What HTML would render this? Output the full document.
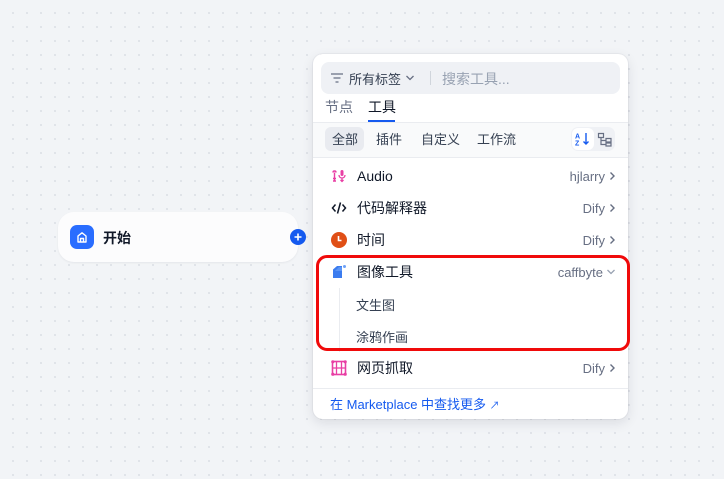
<!DOCTYPE html>
<html><head><meta charset="utf-8"><style>
*{margin:0;padding:0;box-sizing:border-box}
body{width:724px;height:479px;overflow:hidden;background-color:#f2f4f7;background-image:radial-gradient(#dfe2e8 1px,transparent 1.2px);background-size:14px 14px;background-position:6px 6px;font-family:"Liberation Sans","Noto Sans CJK SC",sans-serif;position:relative;color:#101828}
.abs{position:absolute}
.node{left:58px;top:212px;width:240px;height:50px;background:#fcfcfd;border-radius:16px;box-shadow:0 1px 2px rgba(16,24,40,.06)}
.panel{left:313px;top:54px;width:315px;height:365px;background:#fff;border-radius:10px;box-shadow:0 4px 12px rgba(16,24,40,.1),0 0 0 1px rgba(16,24,40,.04)}
.row{position:absolute;left:0;width:315px;height:32px;display:flex;align-items:center;font-size:14px}
.row .name{position:absolute;left:44px}
.row .by{position:absolute;right:12px;font-size:13px;color:#676f83;display:flex;align-items:center;gap:3px}
.ic{position:absolute;left:18px;width:16px;height:16px}
.chip{position:absolute;top:75px;font-size:13px;color:#354052}
</style></head><body>
<div class="abs node">
 <div class="abs" style="left:12px;top:13px;width:24px;height:24px;border-radius:7px;background:#296dff">
  <svg width="24" height="24" viewBox="0 0 24 24"><path d="M8 17V11l4-3.2 4 3.2v6zM10.5 17v-3.5h3V17" fill="none" stroke="#fff" stroke-width="1.4" stroke-linejoin="round"/></svg>
 </div>
 <div class="abs" style="left:45px;top:16px;font-size:14px;font-weight:bold">开始</div>
</div>
<svg class="abs" style="left:290px;top:229px" width="16" height="16"><circle cx="8" cy="8" r="8" fill="#155aef"/><path d="M8 4.5v7M4.5 8h7" stroke="#fff" stroke-width="1.6"/></svg>
<div class="abs panel">
 <div class="abs" style="left:8px;top:8px;width:299px;height:32px;background:#eff1f5;border-radius:8px;font-size:13px;color:#354052">
  <svg class="abs" style="left:9px;top:10px" width="14" height="12"><path d="M1 2h12M3.5 6h7M5.5 10h3" stroke="#676f83" stroke-width="1.3"/></svg>
  <span class="abs" style="left:28px;top:7px">所有标签</span>
  <svg class="abs" style="left:84px;top:12px" width="10" height="8"><path d="M1.5 2l3.5 3.5L8.5 2" fill="none" stroke="#676f83" stroke-width="1.3"/></svg>
  <div class="abs" style="left:109px;top:9px;width:1px;height:14px;background:#d0d5dc"></div>
  <span class="abs" style="left:121px;top:7px;color:#98a2b2;font-size:14px">搜索工具...</span>
 </div>
 <span class="abs" style="left:12px;top:43px;font-size:14px;color:#676f83">节点</span>
 <span class="abs" style="left:55px;top:43px;font-size:14px;color:#101828">工具</span>
 <div class="abs" style="left:55px;top:66px;width:27px;height:2px;background:#155aef"></div>
 <div class="abs" style="left:0;top:68px;width:315px;height:36px;background:#f9fafb;border-top:1px solid #eaecf0;border-bottom:1px solid #eaecf0"></div>
 <div class="abs" style="left:12px;top:73px;width:39px;height:24px;background:#e9ebf0;border-radius:6px"></div>
 <div class="chip" style="left:19px">全部</div>
 <div class="chip" style="left:63px">插件</div>
 <div class="chip" style="left:108px">自定义</div>
 <div class="chip" style="left:164px">工作流</div>
 <div class="abs" style="left:258px;top:73px;width:44px;height:24px;background:#eff1f5;border-radius:7px"></div>
 <div class="abs" style="left:259px;top:74px;width:22px;height:22px;background:#fff;border-radius:6px"></div>
 <svg class="abs" style="left:262px;top:78px" width="16" height="14"><text x="0" y="6.5" font-size="7" fill="#155aef" font-family="Liberation Sans" font-weight="bold">A</text><text x="0" y="13.5" font-size="7" fill="#155aef" font-family="Liberation Sans" font-weight="bold">Z</text><path d="M11 1v11M8.5 9.5L11 12l2.5-2.5" fill="none" stroke="#155aef" stroke-width="1.4"/></svg>
 <svg class="abs" style="left:284px;top:78px" width="16" height="15"><path d="M1.5 1.5h5v4h-5zM9 6.5h5v3.5H9zM9 11h5v3H9zM4 5.5v7h5M4 8.5h5" fill="none" stroke="#676f83" stroke-width="1.2"/></svg>

 <div class="row" style="top:106px"><svg class="ic" viewBox="0 0 16 16"><path d="M2 4.5c0-2 3-2 3 0M3.5 4.5v8M2 10.5h3M2 13h3" fill="none" stroke="#e83fa4" stroke-width="1.4"/><rect x="9.5" y="2" width="3" height="6" rx="1.5" fill="#e83fa4"/><path d="M8 7c0 2 1.5 3 3 3s3-1 3-3M11 10v3.5M9.5 12l1.5 1.5L12.5 12" fill="none" stroke="#e83fa4" stroke-width="1.3"/></svg><span class="name">Audio</span><span class="by">hjlarry <svg width="8" height="10"><path d="M2.5 1.5L6 5 2.5 8.5" fill="none" stroke="#676f83" stroke-width="1.4"/></svg></span></div>
 <div class="row" style="top:138px"><svg class="ic" viewBox="0 0 16 16"><path d="M4.5 4.5L1.5 8l3 3.5M11.5 4.5l3 3.5-3 3.5M9.5 2.5l-3 11" fill="none" stroke="#101828" stroke-width="1.5"/></svg><span class="name">代码解释器</span><span class="by">Dify <svg width="8" height="10"><path d="M2.5 1.5L6 5 2.5 8.5" fill="none" stroke="#676f83" stroke-width="1.4"/></svg></span></div>
 <div class="row" style="top:170px"><svg class="ic" viewBox="0 0 16 16"><circle cx="8" cy="8" r="8" fill="#e04f16"/><path d="M7.5 4v4.5h3" fill="none" stroke="#fff" stroke-width="1.6"/></svg><span class="name">时间</span><span class="by">Dify <svg width="8" height="10"><path d="M2.5 1.5L6 5 2.5 8.5" fill="none" stroke="#676f83" stroke-width="1.4"/></svg></span></div>
 <div class="row" style="top:202px"><svg class="ic" viewBox="0 0 16 16"><path d="M2 5.5L6 2h5v12H2z" fill="#3b7cef"/><path d="M8 3h3v4H3l1 0" fill="#5b95f5"/><circle cx="13.5" cy="2.5" r="1.5" fill="#6ea1f7"/></svg><span class="name">图像工具</span><span class="by">caffbyte <svg width="10" height="8"><path d="M1.5 2l3.5 3.5L8.5 2" fill="none" stroke="#98a2b2" stroke-width="1.3"/></svg></span></div>
 <div class="abs" style="left:26px;top:234px;width:1px;height:64px;background:#eaecf0"></div>
 <div class="row" style="top:234px"><span class="abs" style="left:43px;font-size:13px;color:#354052">文生图</span></div>
 <div class="row" style="top:266px"><span class="abs" style="left:43px;font-size:13px;color:#354052">涂鸦作画</span></div>
 <div class="row" style="top:298px"><svg class="ic" viewBox="0 0 16 16"><rect x="1.5" y="1.5" width="13" height="13" fill="none" stroke="#e83fa4" stroke-width="1.6"/><path d="M5.5 1.5v13M10.5 1.5v13M1.5 8h13" stroke="#e83fa4" stroke-width="1.3"/><circle cx="1.8" cy="1.8" r="1.6" fill="#e83fa4"/><circle cx="14.2" cy="1.8" r="1.6" fill="#e83fa4"/><circle cx="1.8" cy="14.2" r="1.6" fill="#e83fa4"/><circle cx="14.2" cy="14.2" r="1.6" fill="#e83fa4"/></svg><span class="name">网页抓取</span><span class="by">Dify <svg width="8" height="10"><path d="M2.5 1.5L6 5 2.5 8.5" fill="none" stroke="#676f83" stroke-width="1.4"/></svg></span></div>
 <div class="abs" style="left:0;top:334px;width:315px;height:1px;background:#eaecf0"></div>
 <div class="abs" style="left:17px;top:340px;font-size:13px;color:#155aef">在 Marketplace 中查找更多 <span style="font-size:10px">↗</span></div>
</div>
<div class="abs" style="left:316px;top:255px;width:314px;height:96px;border:3px solid #f00a0a;border-radius:11px"></div>
</body></html>
